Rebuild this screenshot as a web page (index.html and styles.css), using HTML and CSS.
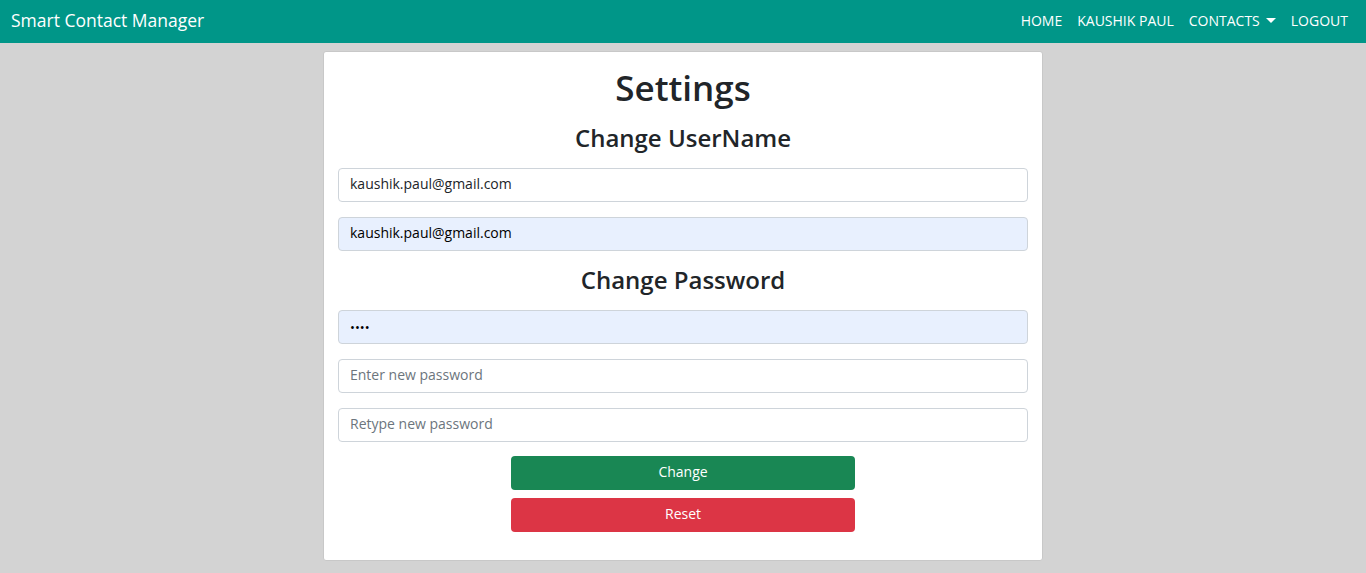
FILE: index.html
```html
<!DOCTYPE html>
<html lang="en">
<head>
<meta charset="utf-8">
<title>Settings</title>
<link rel="stylesheet" href="styles.css">
</head>
<body>
<nav class="navbar">
  <a class="brand" href="#">Smart Contact Manager</a>
  <ul class="nav-links">
    <li><a href="#">HOME</a></li>
    <li><a href="#">KAUSHIK PAUL</a></li>
    <li><a href="#" class="dropdown">CONTACTS<span class="caret"></span></a></li>
    <li><a href="#">LOGOUT</a></li>
  </ul>
</nav>
<main class="page">
  <section class="card">
    <h1 class="title">Settings</h1>
    <h3 class="subtitle">Change UserName</h3>
    <input class="field" type="text" value="kaushik.paul@gmail.com">
    <input class="field autofill" type="text" value="kaushik.paul@gmail.com">
    <h3 class="subtitle second">Change Password</h3>
    <div class="field autofill dots">&bull;&bull;&bull;&bull;</div>
    <input class="field" type="password" placeholder="Enter new password">
    <input class="field" type="password" placeholder="Retype new password">
    <div class="actions">
      <button class="btn btn-green" type="button">Change</button>
      <button class="btn btn-red" type="button">Reset</button>
    </div>
  </section>
</main>
</body>
</html>
```
FILE: styles.css
```css
* { box-sizing: border-box; }
html, body { margin: 0; padding: 0; }
body {
  background: #d3d3d3;
  font-family: "Open Sans", "Noto Sans", sans-serif;
  color: #212529;
  height: 573px;
  overflow: hidden;
}
.navbar {
  height: 43px;
  background: #009688;
  display: flex;
  align-items: center;
  justify-content: space-between;
  padding: 0 18px 0 11px;
}
.brand {
  color: #fff;
  text-decoration: none;
  font-size: 17.5px;
  line-height: 1;
  margin-top: -2px;
}
.nav-links {
  list-style: none;
  margin: 0;
  padding: 0;
  display: flex;
  gap: 15px;
}
.nav-links a {
  color: #fff;
  text-decoration: none;
  font-size: 14px;
  display: flex;
  align-items: center;
  line-height: 1;
  margin-top: -2px;
}
.caret {
  display: inline-block;
  margin-left: 6px;
  width: 0;
  height: 0;
  border-top: 5px solid #fff;
  border-left: 5px solid transparent;
  border-right: 5px solid transparent;
}
.page {
  padding-top: 8px;
}
.card {
  width: 720px;
  height: 510px;
  margin: 0 auto;
  background: #fff;
  border: 1px solid #c8c8c8;
  border-radius: 3px;
  padding: 14px 14px 0;
  display: flex;
  flex-direction: column;
  align-items: stretch;
}
.title {
  margin: 0;
  text-align: center;
  font-size: 35px;
  font-weight: 600;
  line-height: 44px;
}
.subtitle {
  margin: 12px 0 14px;
  text-align: center;
  font-size: 24px;
  font-weight: 600;
  line-height: 32px;
}
.subtitle.second {
  margin-top: -2px;
}
.field {
  display: block;
  width: 100%;
  height: 34px;
  margin: 0 0 15px;
  padding: 0 11px 3px;
  border: 1px solid #ced4da;
  border-radius: 4px;
  background: #fff;
  color: #212529;
  font-family: inherit;
  font-size: 14px;
  outline: none;
}
.field::placeholder { color: #6c757d; }
.autofill { background: #e8f0fe; color: #000; }
.dots {
  display: flex;
  align-items: center;
  padding-bottom: 1px;
  font-size: 13px;
  letter-spacing: 0;
}
.actions {
  display: flex;
  flex-direction: column;
  align-items: center;
  gap: 8px;
  margin-top: -1px;
}
.btn {
  width: 344px;
  height: 34px;
  border: none;
  border-radius: 4px;
  color: #fff;
  font-family: inherit;
  font-size: 14px;
  padding: 0 0 3px;
  cursor: pointer;
}
.btn-green { background: #198754; }
.btn-red { background: #dc3545; }
```
